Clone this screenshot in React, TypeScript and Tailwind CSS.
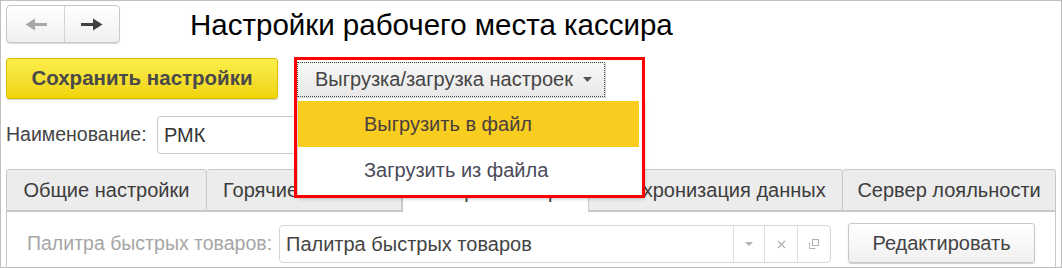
import React from "react";

const F = { fontFamily: '"Liberation Sans", Arial, sans-serif' };

function Arrow({ dir, color }: { dir: "left" | "right"; color: string }) {
  return (
    <svg width="22" height="13" viewBox="0 0 22 13" style={{ transform: dir === "left" ? "scaleX(-1)" : undefined }}>
      <polygon points="0,5 12,5 12,0.5 21.5,6.5 12,12.5 12,8 0,8" fill={color} />
    </svg>
  );
}

function Tab({ label, w, active }: { label: string; w: string; active?: boolean }) {
  return (
    <div
      className={
        active
          ? `${w} h-[44px] -mb-px border border-b-0 border-[#c8c8c8] bg-white rounded-t-[3px] flex items-center justify-center text-[20px] text-[#3c3c3c]`
          : `${w} h-[42px] border border-[#c8c8c8] border-l-0 first:border-l bg-[#ececec] rounded-t-[3px] flex items-center justify-center text-[20px] text-[#3c3c3c]`
      }
    >
      {label}
    </div>
  );
}

export default function App() {
  return (
    <div style={F} className="relative w-[1062px] h-[268px] overflow-hidden bg-white border border-[#c0c0c0]">
      <div className="flex flex-col pl-[5px] pr-[5px]">
        {/* Row 1 */}
        <div className="flex items-center h-[38px] mt-[4px]">
          <div className="flex w-[114px] h-[38px] border border-[#c8c8c8] rounded-[4px] bg-gradient-to-b from-white to-[#f0f0f0] shadow-[0_1px_1px_rgba(0,0,0,0.15)]">
            <div className="w-[58px] flex items-center justify-center border-r border-[#d4d4d4]">
              <Arrow dir="left" color="#a8a8a8" />
            </div>
            <div className="flex-1 flex items-center justify-center">
              <Arrow dir="right" color="#404040" />
            </div>
          </div>
          <div className="ml-[70px] mt-[2px] text-[29.5px] text-black leading-none">Настройки рабочего места кассира</div>
        </div>
        {/* Row 2 */}
        <div className="flex items-center mt-[15px] h-[41px]">
          <div className="w-[272px] h-[41px] rounded-[3px] border border-[#d8c000] bg-gradient-to-b from-[#fbee4a] to-[#f0d400] shadow-[0_1px_1px_rgba(0,0,0,0.2)] flex items-center justify-center font-bold text-[20.5px] text-[#4a4a4a]">
            Сохранить настройки
          </div>
          <div className="ml-[19px] w-[308px] h-[35px] mt-[1px] border border-dotted border-[#444] bg-gradient-to-b from-[#f8f8f8] to-[#e8e8e8] flex items-center pl-[17px] text-[20px] text-[#444] shadow-[1px_1px_1px_rgba(0,0,0,0.15)]">
            Выгрузка/загрузка настроек
            <svg className="ml-[10px]" width="9" height="5" viewBox="0 0 9 5"><polygon points="0,0 9,0 4.5,5" fill="#555" /></svg>
          </div>
        </div>
        {/* Row 3 */}
        <div className="flex items-center mt-[17px] h-[38px]">
          <div className="text-[19.5px] text-[#444] w-[151px]">Наименование:</div>
          <div className="w-[470px] h-[38px] border border-[#c8c8c8] rounded-[4px] flex items-center pl-[6px] text-[20px] text-[#333]">РМК</div>
        </div>
        {/* Tabs */}
        <div className="flex items-end mt-[13px] h-[44px] relative z-0">
          <Tab label="Общие настройки" w="w-[201px]" />
          <Tab label="Горячие клавиши" w="w-[195px]" />
          <Tab label="Быстрые товары" w="w-[188px]" active />
          <Tab label="Синхронизация данных" w="w-[254px]" />
          <Tab label="Сервер лояльности" w="w-[213px]" />
        </div>
        <div className="border border-[#c8c8c8] h-[60px] w-[1050px] flex items-start pt-[13px] pl-[20px]">
          <div className="text-[19.5px] text-[#a6a6a6] h-[38px] flex items-center w-[252px]">Палитра быстрых товаров:</div>
          <div className="flex w-[552px] h-[38px] border border-[#d4d4d4] rounded-[4px]">
            <div className="flex-1 flex items-center pl-[6px] text-[20px] text-[#444]">Палитра быстрых товаров</div>
            <div className="w-[31px] border-l border-[#e0e0e0] flex items-center justify-center">
              <svg width="8" height="4" viewBox="0 0 8 4"><polygon points="0,0 8,0 4,4" fill="#b0b0b0" /></svg>
            </div>
            <div className="w-[33px] border-l border-[#e0e0e0] flex items-center justify-center">
              <svg width="9" height="9" viewBox="0 0 9 9"><path d="M1 1L8 8M8 1L1 8" stroke="#b0b0b0" strokeWidth="1.2" /></svg>
            </div>
            <div className="w-[33px] border-l border-[#e0e0e0] flex items-center justify-center">
              <svg width="12" height="12" viewBox="0 0 12 12">
                <path d="M1.5 4.5V10.5H7.5" fill="none" stroke="#b0b0b0" strokeWidth="1" />
                <rect x="4.5" y="1.5" width="6" height="6" fill="none" stroke="#b0b0b0" strokeWidth="1" />
              </svg>
            </div>
          </div>
          <div className="ml-[17px] w-[187px] h-[40px] -mt-[2px] border border-[#c8c8c8] rounded-[3px] bg-gradient-to-b from-white to-[#f0f0f0] shadow-[0_1px_1px_rgba(0,0,0,0.2)] flex items-center justify-center text-[20px] text-[#444]">
            Редактировать
          </div>
        </div>
      </div>

      {/* Popup menu overlay */}
      <div className="absolute left-[296px] top-[97px] w-[345px] h-[97px] bg-white shadow-[2px_3px_4px_rgba(0,0,0,0.35)] border-l border-[#d0d0d0] flex flex-col pt-[3px] z-10">
        <div className="h-[46px] mr-[3px] bg-[#f9cd1f] flex items-center pl-[66px] text-[20px] text-[#4a4040]">Выгрузить в файл</div>
        <div className="h-[46px] flex items-center pl-[66px] text-[20px] text-[#4a4a5a]">Загрузить из файла</div>
      </div>
      {/* Red highlight frame */}
      <div className="absolute left-[293px] top-[56px] w-[351px] h-[141px] border-[3px] border-[#ff0000] z-20 pointer-events-none" />
    </div>
  );
}
